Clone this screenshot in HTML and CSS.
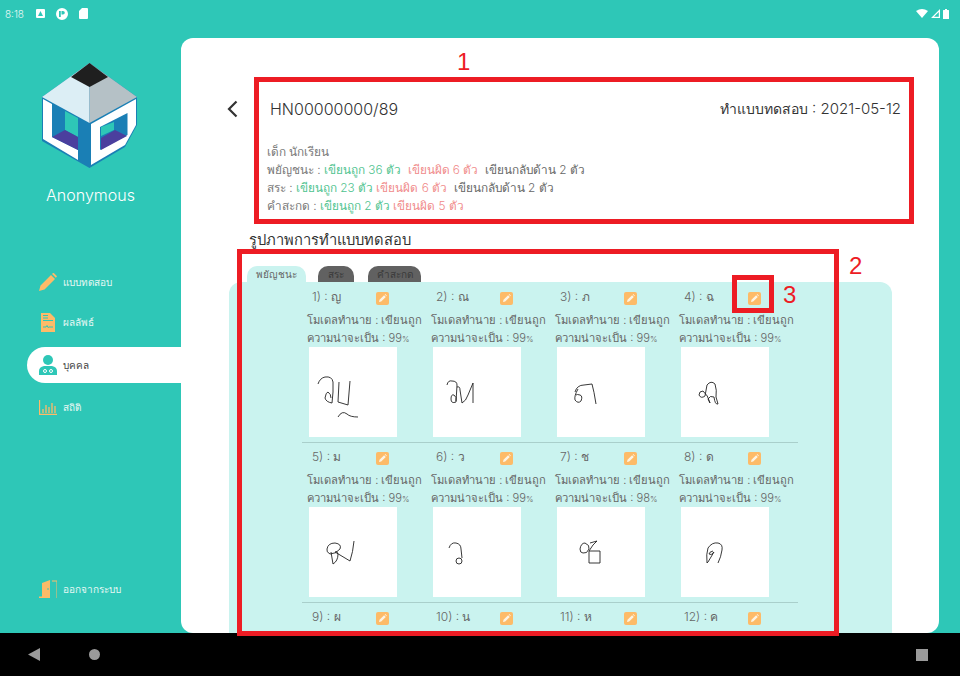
FILE: index.html
```html
<!DOCTYPE html>
<html lang="th">
<head>
    <meta charset="UTF-8">
    <meta name="viewport" content="width=device-width, initial-scale=1.0">
    <title>ผลการทำแบบทดสอบ</title>
    <link rel="stylesheet" href="styles.css">
</head>
<body>
<svg class="defs" width="0" height="0">
    <symbol id="pencil" viewBox="0 0 13 13">
        <rect width="13" height="13" rx="2" fill="#fdbb68"/>
        <path d="M3 10l.5-2.200 4.600-4.600 1.700 1.700-4.600 4.600zM8.700 2.600l.6-.5 1.600 1.600-.5.6z" fill="#fdf3e2"/>
    </symbol>
</svg>
<div class="app">
    <div class="statusbar">
        <div class="status-left">
            <span class="clock">8:18</span>
            <svg class="st-a" width="9" height="9" viewBox="0 0 9 9"><path d="M1 0h7a1 1 0 011 1v7a1 1 0 01-1 1H1a1 1 0 01-1-1V1a1 1 0 011-1zm3.500 2L2 7h5z" fill="#fff"/></svg>
            <svg class="st-b" width="12" height="12" viewBox="0 0 12 12"><path d="M6 0a6 6 0 110 12A6 6 0 016 0zM3 3v6h1.800V3zm2.500 0v3.600H7A1.800 1.800 0 007 3z" fill="#fff"/></svg>
            <svg class="st-c" width="9" height="11" viewBox="0 0 9 11"><path d="M3 0h5a1 1 0 011 1v9a1 1 0 01-1 1H1a1 1 0 01-1-1V3z" fill="#fff"/></svg>
        </div>
        <div class="status-right">
            <svg width="12" height="9" viewBox="0 0 12 9"><path d="M0 2Q6-2 12 2L6 9z" fill="#fff"/></svg>
            <svg width="9" height="9" viewBox="0 0 9 9"><path d="M9 0v9H0zM7.800 3L3 7.800h4.800z" fill="#fff"/></svg>
            <svg width="6" height="10" viewBox="0 0 6 10"><path d="M2 0h2v1h1.500a.5.5 0 01.5.5V10H0V1.500a.5.5 0 01.5-.5H2z" fill="#fff"/></svg>
        </div>
    </div>
    <div class="main">
        <aside class="sidebar">
            <svg class="logo" width="96" height="106" viewBox="0 0 96 106">
                <path d="M47.500 0L95 34v28L83 84 47.500 105 0 78V34z" fill="#1a7fb5"/>
                <path d="M47.500 0L0 34l47.500 26z" fill="#dceef5"/>
                <path d="M47.500 0L95 34 47.500 60z" fill="#b5c1c6"/>
                <path d="M47.500 0L66 14 47.500 24 29 14z" fill="#1f1f1f"/>
                <path d="M1 36l9 5v33l26 13v10L1 76z" fill="#fff"/>
                <path d="M23 48l13 7v19L23 67z" fill="#2ec7b7"/>
                <path d="M10 74l13-7 13 7v13z" fill="#4b3f9e"/>
                <path d="M49 61l45-25v26L83 82 49 102z" fill="#fff"/>
                <path d="M58 64l27.500-14v22L58 87z" fill="#1a7fb5"/>
                <path d="M59 64l13-5v8l-13 6z" fill="#2ec7b7"/>
                <path d="M59 75l14-8 12 6-26 14z" fill="#4b3f9e"/>
            </svg>
            <div class="username">Anonymous</div>
            <nav class="menu">
                <a class="menu-item" href="#">
                    <svg width="18" height="18" viewBox="0 0 18 18"><path d="M0 18l1.500-5.500L12 2l4 4L5.500 16.500zM13 1l1-1 .8 0 3 3 0 .8-1 1z" fill="#fdbb68"/></svg>
                    <span>แบบทดสอบ</span>
                </a>
                <a class="menu-item" href="#">
                    <svg width="18" height="19" viewBox="0 0 14 19"><path d="M0 0h9l5 5v14H0z" fill="#fdbb68"/><path d="M2 2.500h5M2 5h5M2 7.500h10M2 14h3l1-1.500 1 2 1-.5h4" stroke="#2ec7b7" fill="none"/></svg>
                    <span>ผลลัพธ์</span>
                </a>
                <a class="menu-item active" href="#">
                    <svg width="18" height="20" viewBox="0 0 18 20"><circle cx="9" cy="5" r="5" fill="#2ec7b7"/><path d="M0 20v-4q0-4 5-5h8q5 1 5 5v4z" fill="#2ec7b7"/><circle cx="6" cy="16" r="1.500" fill="none" stroke="#fff"/><circle cx="12" cy="16" r="1.500" fill="none" stroke="#fff"/></svg>
                    <span>บุคคล</span>
                </a>
                <a class="menu-item" href="#">
                    <svg width="18" height="15" viewBox="0 0 18 15"><path d="M.5 0v14.500H18M4 13V9M7 13V5M10 13V7M13 13V3M16 13V6" stroke="#fdbb68" fill="none" stroke-width="1.300"/></svg>
                    <span>สถิติ</span>
                </a>
            </nav>
            <a class="menu-item logout" href="#">
                <svg width="18" height="18" viewBox="0 0 18 18"><path d="M0 18v-1.500h3V3l8-3v18z" fill="#fdbb68"/><path d="M13 1h5v17" stroke="#fdbb68" fill="none"/><circle cx="9" cy="9" r=".8" fill="#2ec7b7"/></svg>
                <span>ออกจากระบบ</span>
            </a>
        </aside>
        <section class="panel">
            <div class="report">
                <a class="back" href="#"><svg width="11" height="18" viewBox="0 0 11 18"><path d="M9.500 1.500L2 9l7.500 7.500" fill="none" stroke="#333" stroke-width="2.200"/></svg></a>
                <div class="report-body">
                    <div class="report-top">
                        <span class="hn">HN00000000/89</span>
                        <span class="test-date"><span class="test-label">ทำแบบทดสอบ</span> : 2021-05-12</span>
                    </div>
                    <div class="summary">
                        <p>เด็ก นักเรียน</p>
                        <p>พยัญชนะ : <span class="ok">เขียนถูก 36 ตัว</span> &nbsp;<span class="bad">เขียนผิด 6 ตัว</span> &nbsp;<span class="flip">เขียนกลับด้าน 2 ตัว</span></p>
                        <p>สระ : <span class="ok">เขียนถูก 23 ตัว</span> <span class="bad">เขียนผิด 6 ตัว</span> &nbsp;<span class="flip">เขียนกลับด้าน 2 ตัว</span></p>
                        <p>คำสะกด : <span class="ok">เขียนถูก 2 ตัว</span> <span class="bad">เขียนผิด 5 ตัว</span></p>
                    </div>
                </div>
            </div>
            <h3 class="section-title">รูปภาพการทำแบบทดสอบ</h3>
            <div class="tabs">
                <span class="tab selected">พยัญชนะ</span>
                <span class="tab">สระ</span>
                <span class="tab">คำสะกด</span>
            </div>
            <div class="card">
                <div class="grid">
                    <div class="cell">
                        <div class="cell-head"><span>1) : ญ</span><svg class="edit"><use href="#pencil"/></svg></div>
                        <p>โมเดลทำนาย : เขียนถูก</p>
                        <p>ความน่าจะเป็น : 99<small>%</small></p>
                        <svg class="sample" viewBox="0 0 88 90"><path d="M9 37Q11 31 16 30 23 29 24 35L24 45 23 56Q17 55 16 51 17 45 19 45 22 47 22 51M30 35L29 55 39 58 41 34M29 70Q33 63 38 67 41 70 49 70"/></svg>
                    </div>
                    <div class="cell">
                        <div class="cell-head"><span>2) : ณ</span><svg class="edit"><use href="#pencil"/></svg></div>
                        <p>โมเดลทำนาย : เขียนถูก</p>
                        <p>ความน่าจะเป็น : 99<small>%</small></p>
                        <svg class="sample" viewBox="0 0 88 90"><path d="M14 38Q15 33 19 34 24 34 24 38L23 55Q18 57 18 52 18 47 21 48 24 50 23 54M24 40Q27 39 27 43L29 56Q33 54 35 48L40 36 40 56"/></svg>
                    </div>
                    <div class="cell">
                        <div class="cell-head"><span>3) : ภ</span><svg class="edit"><use href="#pencil"/></svg></div>
                        <p>โมเดลทำนาย : เขียนถูก</p>
                        <p>ความน่าจะเป็น : 99<small>%</small></p>
                        <svg class="sample" viewBox="0 0 88 90"><path d="M18 45Q20 38 27 38L35 37Q37 44 39 57M21 42Q17 49 18 53 21 57 24 54 26 49 23 48 20 47 19 48"/></svg>
                    </div>
                    <div class="cell">
                        <div class="cell-head"><span>4) : ฉ</span><svg class="edit"><use href="#pencil"/></svg></div>
                        <p>โมเดลทำนาย : เขียนถูก</p>
                        <p>ความน่าจะเป็น : 99<small>%</small></p>
                        <svg class="sample" viewBox="0 0 88 90"><path d="M26 38Q30 33 34 37 36 43 35 50L37 57Q34 58 33 50 29 48 27 52L29 56Q27 48 22 44 18 44 18 48 20 52 24 49L26 38"/></svg>
                    </div>
                </div>
                <div class="grid">
                    <div class="cell">
                        <div class="cell-head"><span>5) : ม</span><svg class="edit"><use href="#pencil"/></svg></div>
                        <p>โมเดลทำนาย : เขียนถูก</p>
                        <p>ความน่าจะเป็น : 99<small>%</small></p>
                        <svg class="sample" viewBox="0 0 88 90"><path d="M18 42Q19 36 26 36 33 37 31 42 27 47 21 47 17 45 18 42M22 45L24 57Q29 54 29 47 28 43 26 45L41 54Q44 45 45 34"/></svg>
                    </div>
                    <div class="cell">
                        <div class="cell-head"><span>6) : ว</span><svg class="edit"><use href="#pencil"/></svg></div>
                        <p>โมเดลทำนาย : เขียนถูก</p>
                        <p>ความน่าจะเป็น : 99<small>%</small></p>
                        <svg class="sample" viewBox="0 0 88 90"><path d="M16 41Q18 35 23 36 28 37 28 42L29 51M29 54A3 3 0 1 1 23 54 3 3 0 1 1 29 54"/></svg>
                    </div>
                    <div class="cell">
                        <div class="cell-head"><span>7) : ช</span><svg class="edit"><use href="#pencil"/></svg></div>
                        <p>โมเดลทำนาย : เขียนถูก</p>
                        <p>ความน่าจะเป็น : 98<small>%</small></p>
                        <svg class="sample" viewBox="0 0 88 90"><path d="M23 42Q24 36 28 36 33 38 32 42 30 47 26 46 23 46 23 42M33 36L40 34 36 38 32 44 43 44 43 56 32 56 32 44"/></svg>
                    </div>
                    <div class="cell">
                        <div class="cell-head"><span>8) : ด</span><svg class="edit"><use href="#pencil"/></svg></div>
                        <p>โมเดลทำนาย : เขียนถูก</p>
                        <p>ความน่าจะเป็น : 99<small>%</small></p>
                        <svg class="sample" viewBox="0 0 88 90"><path d="M26 56Q25 47 27 41 31 35 37 36 42 37 41 43 40 50 37 56M32 44Q28 45 28 47 30 49 33 45L27 55 26 56"/></svg>
                    </div>
                </div>
                <div class="grid">
                    <div class="cell">
                        <div class="cell-head"><span>9) : ผ</span><svg class="edit"><use href="#pencil"/></svg></div>
                    </div>
                    <div class="cell">
                        <div class="cell-head"><span>10) : น</span><svg class="edit"><use href="#pencil"/></svg></div>
                    </div>
                    <div class="cell">
                        <div class="cell-head"><span>11) : ห</span><svg class="edit"><use href="#pencil"/></svg></div>
                    </div>
                    <div class="cell">
                        <div class="cell-head"><span>12) : ค</span><svg class="edit"><use href="#pencil"/></svg></div>
                    </div>
                </div>
            </div>
        </section>
    </div>
    <div class="navbar">
        <svg width="12" height="13" viewBox="0 0 12 13"><path d="M12 0v13L0 6.500z" fill="#9a9a9a"/></svg>
        <span class="nav-home"></span>
        <span class="nav-recent"></span>
    </div>
    <div class="mark mark-1"></div>
    <div class="mark mark-2"></div>
    <div class="mark mark-3"></div>
    <span class="mark-no no-1">1</span>
    <span class="mark-no no-2">2</span>
    <span class="mark-no no-3">3</span>
</div>
</body>
</html>
```

FILE: styles.css
```css
* {
    box-sizing: border-box;
}
body {
    margin: 0;
    font-family: Inter, "Noto Sans", sans-serif;
    font-weight: 300;
    background: #2ec7b7;
    overflow: hidden;
}
p {
    margin: 0;
}
a {
    text-decoration: none;
}
.defs {
    display: block;
}
.app {
    position: relative;
    width: 960px;
    height: 676px;
    display: flex;
    flex-direction: column;
    overflow: hidden;
}

/* status bar */
.statusbar {
    height: 24px;
    padding: 3px 11px 0 5px;
    display: flex;
    justify-content: space-between;
    align-items: center;
    color: #e6f7f4;
}
.status-left {
    display: flex;
    align-items: center;
}
.clock {
    font-size: 10px;
    width: 31px;
}
.st-b {
    margin-left: 11px;
}
.st-c {
    margin-left: 11px;
}
.status-right {
    display: flex;
    align-items: center;
    gap: 3px;
}

/* sidebar */
.main {
    flex: 1;
    display: flex;
    min-height: 0;
    padding-top: 14px;
    padding-right: 21px;
}
.sidebar {
    width: 181px;
    flex: none;
    display: flex;
    flex-direction: column;
    padding-top: 25px;
}
.logo {
    margin-left: 42px;
    display: block;
}
.username {
    margin-top: 15px;
    text-align: center;
    color: #fff;
    font-size: 16px;
    line-height: 22px;
}
.menu {
    margin-top: 58px;
    display: flex;
    flex-direction: column;
    gap: 4px;
}
.menu-item {
    height: 36px;
    display: flex;
    align-items: center;
    gap: 6px;
    padding-left: 39px;
    color: #e6f7f4;
    font-size: 10px;
}
.menu-item.active {
    margin: 3px 0 2px 27px;
    padding-left: 12px;
    background: #fff;
    color: #444;
    border-radius: 18px 0 0 18px;
}
.logout {
    margin-top: auto;
    margin-bottom: 26px;
}

/* white panel */
.panel {
    flex: 1;
    background: #fff;
    border-radius: 12px;
    overflow: hidden;
    display: flex;
    flex-direction: column;
    color: #444;
}
.report {
    display: flex;
    padding: 62px 38px 0 46px;
    height: 191px;
}
.back {
    width: 26px;
    flex: none;
    display: block;
    height: 18px;
}
.back svg {
    display: block;
}
.report-body {
    flex: 1;
    margin-left: 14px;
}
.report-top {
    display: flex;
    justify-content: space-between;
    align-items: center;
    padding-left: 3px;
    height: 18px;
    font-size: 16px;
    color: #333;
}
.test-date {
    font-size: 15px;
}
.test-label {
    font-size: 14px;
    font-weight: 200;
}
.summary {
    margin-top: 25px;
    font-size: 11.800px;
    line-height: 18px;
    color: #777;
}
.ok {
    color: #4fc38f;
}
.bad {
    color: #f08a8a;
}
.flip {
    color: #666;
}
.section-title {
    margin: 0 0 0 68px;
    height: 22px;
    line-height: 22px;
    font-size: 14.700px;
    font-weight: 200;
    color: #333;
}
.tabs {
    margin: 15px 0 0 66px;
    height: 16px;
    display: flex;
}
.tab {
    height: 16px;
    margin-right: 14px;
    border-radius: 10px 10px 0 0;
    background: #616161;
    color: #3a3a3a;
    font-size: 10px;
    line-height: 17px;
    text-align: center;
}
.tab:nth-child(1) {
    width: 59px;
    margin-right: 12px;
}
.tab:nth-child(2) {
    width: 36px;
}
.tab:nth-child(3) {
    width: 53px;
}
.tab.selected {
    background: #caf3ef;
    color: #666;
}
.card {
    flex: 1;
    margin: 0 47px 0 48px;
    padding: 1px 0 0 73px;
    background: #caf3ef;
    border-radius: 12px 12px 0 0;
    overflow: hidden;
}
.grid {
    width: 496px;
    height: 160px;
    display: grid;
    grid-template-columns: repeat(4, 124px);
    border-bottom: 1px solid #a9cfcb;
}
.grid:last-child {
    border-bottom: none;
}
.cell {
    padding: 5px 0 0 5px;
    font-size: 11.200px;
    line-height: 18px;
    color: #666;
    white-space: nowrap;
}
.cell-head {
    height: 23px;
    padding-left: 5px;
    display: flex;
    align-items: flex-start;
    font-size: 12px;
}
.cell-head span {
    width: 64px;
}
.edit {
    width: 13px;
    height: 13px;
    margin-top: 4px;
}
.cell small {
    font-size: 8px;
}
.sample {
    display: block;
    width: 88px;
    height: 90px;
    margin: -1px 0 0 2px;
    background: #fff;
}
.sample path {
    fill: none;
    stroke: #222;
    stroke-width: 0.900;
}

/* android buttons */
.navbar {
    height: 43px;
    flex: none;
    background: #000;
    display: flex;
    align-items: center;
    padding: 0 32px 0 28px;
}
.nav-home {
    width: 11px;
    height: 11px;
    margin-left: 49px;
    border-radius: 50%;
    background: #9a9a9a;
}
.nav-recent {
    width: 12px;
    height: 12px;
    margin-left: auto;
    background: #9a9a9a;
}

/* red annotations on top of the screenshot */
.mark {
    position: absolute;
    border: 5px solid #ed1c24;
}
.mark-1 {
    left: 254px;
    top: 77px;
    width: 660px;
    height: 147px;
}
.mark-2 {
    left: 237px;
    top: 249px;
    width: 602px;
    height: 387px;
}
.mark-3 {
    left: 732px;
    top: 275px;
    width: 42px;
    height: 38px;
}
.mark-no {
    position: absolute;
    color: #ed1c24;
    font-family: "Liberation Sans", sans-serif;
    font-weight: 400;
    font-size: 24px;
    line-height: 24px;
}
.no-1 {
    left: 457px;
    top: 50px;
}
.no-2 {
    left: 849px;
    top: 254px;
}
.no-3 {
    left: 783px;
    top: 283px;
}
```
